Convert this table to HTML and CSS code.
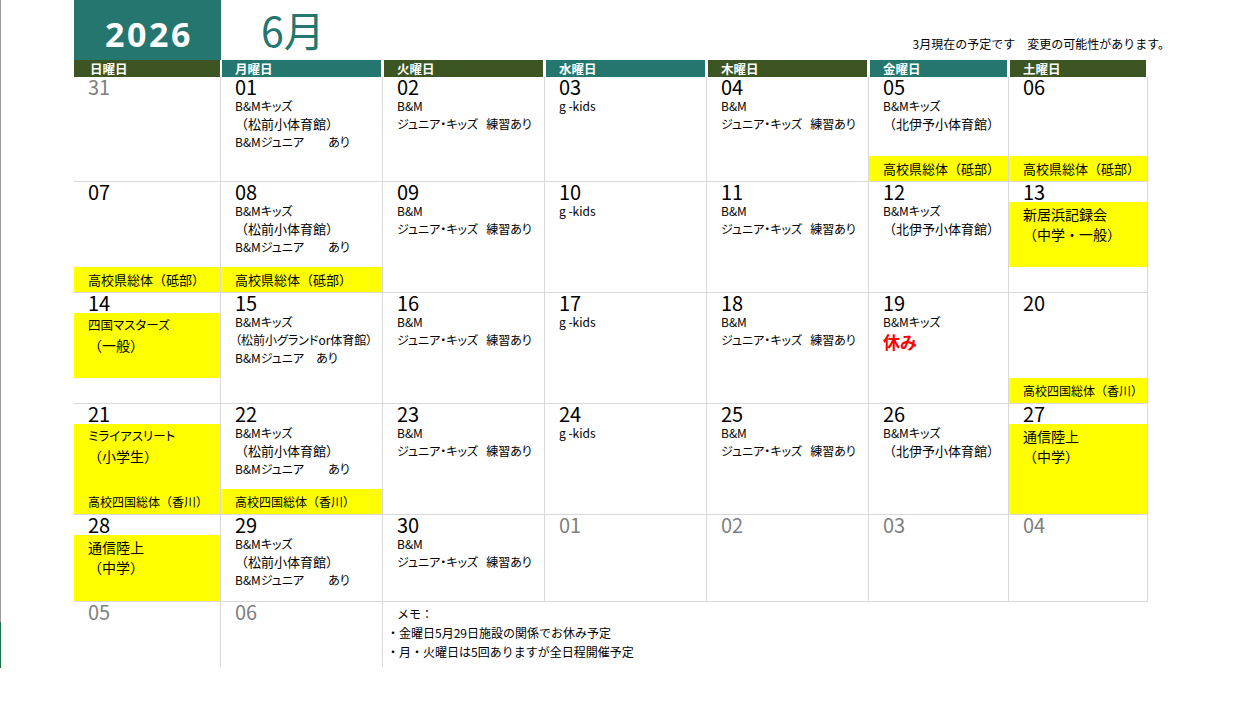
FILE: index.html
```html
<!DOCTYPE html>
<html lang="ja">
<head>
<meta charset="utf-8">
<title>2026年6月 予定表</title>
<link rel="stylesheet" href="styles.css">
</head>
<body>
<div class="frame">
  <div class="edge"><div class="edge-gray"></div><div class="edge-green"></div></div>
  <div class="sheet">
    <header class="top">
      <div class="year">2026</div>
      <div class="month">6月</div>
      <p class="note">3月現在の予定です　変更の可能性があります。</p>
    </header>
    <div class="cal">
      <div class="dow dow-sun olive">日曜日</div>
      <div class="dow teal">月曜日</div>
      <div class="dow olive">火曜日</div>
      <div class="dow teal">水曜日</div>
      <div class="dow olive">木曜日</div>
      <div class="dow teal">金曜日</div>
      <div class="dow olive">土曜日</div>

      <!-- week 1 -->
      <div class="day"><div class="num out">31</div><div class="evs"></div></div>
      <div class="day"><div class="num">01</div><div class="evs">
        <div class="ev">B&amp;Mキッズ</div>
        <div class="ev np">（松前小体育館）</div>
        <div class="ev">B&amp;Mジュニア　　あり</div>
      </div></div>
      <div class="day"><div class="num">02</div><div class="evs">
        <div class="ev">B&amp;M</div>
        <div class="ev">ジュニア・キッズ   練習あり</div>
      </div></div>
      <div class="day"><div class="num">03</div><div class="evs">
        <div class="ev">g -kids</div>
      </div></div>
      <div class="day"><div class="num">04</div><div class="evs">
        <div class="ev">B&amp;M</div>
        <div class="ev">ジュニア・キッズ   練習あり</div>
      </div></div>
      <div class="day"><div class="num">05</div><div class="evs">
        <div class="ev">B&amp;Mキッズ</div>
        <div class="ev np">（北伊予小体育館）</div>
      </div><div class="band hl">高校県総体（砥部）</div></div>
      <div class="day"><div class="num">06</div><div class="evs"></div><div class="band hl">高校県総体（砥部）</div></div>

      <!-- week 2 -->
      <div class="day"><div class="num">07</div><div class="evs"></div><div class="band hl">高校県総体（砥部）</div></div>
      <div class="day"><div class="num">08</div><div class="evs">
        <div class="ev">B&amp;Mキッズ</div>
        <div class="ev np">（松前小体育館）</div>
        <div class="ev">B&amp;Mジュニア　　あり</div>
      </div><div class="band hl">高校県総体（砥部）</div></div>
      <div class="day"><div class="num">09</div><div class="evs">
        <div class="ev">B&amp;M</div>
        <div class="ev">ジュニア・キッズ   練習あり</div>
      </div></div>
      <div class="day"><div class="num">10</div><div class="evs">
        <div class="ev">g -kids</div>
      </div></div>
      <div class="day"><div class="num">11</div><div class="evs">
        <div class="ev">B&amp;M</div>
        <div class="ev">ジュニア・キッズ   練習あり</div>
      </div></div>
      <div class="day"><div class="num">12</div><div class="evs">
        <div class="ev">B&amp;Mキッズ</div>
        <div class="ev np">（北伊予小体育館）</div>
      </div></div>
      <div class="day"><div class="num">13</div><div class="evs hl">
        <div class="ev big">新居浜記録会</div>
        <div class="ev big">（中学・一般）</div>
      </div><div class="band"></div></div>

      <!-- week 3 -->
      <div class="day"><div class="num">14</div><div class="evs hl">
        <div class="ev bigk">四国マスターズ</div>
        <div class="ev big">（一般）</div>
      </div><div class="band"></div></div>
      <div class="day"><div class="num">15</div><div class="evs">
        <div class="ev">B&amp;Mキッズ</div>
        <div class="ev">（松前小グランドor体育館）</div>
        <div class="ev">B&amp;Mジュニア　あり</div>
      </div></div>
      <div class="day"><div class="num">16</div><div class="evs">
        <div class="ev">B&amp;M</div>
        <div class="ev">ジュニア・キッズ   練習あり</div>
      </div></div>
      <div class="day"><div class="num">17</div><div class="evs">
        <div class="ev">g -kids</div>
      </div></div>
      <div class="day"><div class="num">18</div><div class="evs">
        <div class="ev">B&amp;M</div>
        <div class="ev">ジュニア・キッズ   練習あり</div>
      </div></div>
      <div class="day"><div class="num">19</div><div class="evs">
        <div class="ev">B&amp;Mキッズ</div>
        <div class="ev off">休み</div>
      </div></div>
      <div class="day"><div class="num">20</div><div class="evs"></div><div class="band sm hl">高校四国総体（香川）</div></div>

      <!-- week 4 -->
      <div class="day"><div class="num">21</div><div class="evs hl">
        <div class="ev bigk">ミライアスリート</div>
        <div class="ev big">（小学生）</div>
      </div><div class="band sm hl">高校四国総体（香川）</div></div>
      <div class="day"><div class="num">22</div><div class="evs">
        <div class="ev">B&amp;Mキッズ</div>
        <div class="ev np">（松前小体育館）</div>
        <div class="ev">B&amp;Mジュニア　　あり</div>
      </div><div class="band sm hl">高校四国総体（香川）</div></div>
      <div class="day"><div class="num">23</div><div class="evs">
        <div class="ev">B&amp;M</div>
        <div class="ev">ジュニア・キッズ   練習あり</div>
      </div></div>
      <div class="day"><div class="num">24</div><div class="evs">
        <div class="ev">g -kids</div>
      </div></div>
      <div class="day"><div class="num">25</div><div class="evs">
        <div class="ev">B&amp;M</div>
        <div class="ev">ジュニア・キッズ   練習あり</div>
      </div></div>
      <div class="day"><div class="num">26</div><div class="evs">
        <div class="ev">B&amp;Mキッズ</div>
        <div class="ev np">（北伊予小体育館）</div>
      </div></div>
      <div class="day"><div class="num">27</div><div class="evs hl">
        <div class="ev big">通信陸上</div>
        <div class="ev big">（中学）</div>
      </div></div>

      <!-- week 5 -->
      <div class="day"><div class="num">28</div><div class="evs hl">
        <div class="ev big">通信陸上</div>
        <div class="ev big">（中学）</div>
      </div></div>
      <div class="day"><div class="num">29</div><div class="evs">
        <div class="ev">B&amp;Mキッズ</div>
        <div class="ev np">（松前小体育館）</div>
        <div class="ev">B&amp;Mジュニア　　あり</div>
      </div></div>
      <div class="day"><div class="num">30</div><div class="evs">
        <div class="ev">B&amp;M</div>
        <div class="ev">ジュニア・キッズ   練習あり</div>
      </div></div>
      <div class="day"><div class="num out">01</div><div class="evs"></div></div>
      <div class="day"><div class="num out">02</div><div class="evs"></div></div>
      <div class="day"><div class="num out">03</div><div class="evs"></div></div>
      <div class="day"><div class="num out">04</div><div class="evs"></div></div>

      <!-- week 6 -->
      <div class="day last"><div class="num out">05</div><div class="evs"></div></div>
      <div class="day last"><div class="num out">06</div><div class="evs"></div></div>
      <div class="memo">
        <p class="memo-title">メモ：</p>
        <p>・金曜日5月29日施設の関係でお休み予定</p>
        <p>・月・火曜日は5回ありますが全日程開催予定</p>
      </div>
    </div>
  </div>
</div>
</body>
</html>
```

FILE: styles.css
```css
* {
  box-sizing: border-box;
  margin: 0;
  padding: 0;
}

body {
  margin: 0;
  background: #ffffff;
  color: #000000;
  font-family: "Noto Sans CJK JP", "Noto Sans", sans-serif;
}

.frame {
  display: flex;
  height: 668px;
}

.edge {
  width: 1px;
  display: flex;
  flex-direction: column;
}

.edge-gray {
  flex: 1;
  background: #9a9a9a;
}

.edge-green {
  height: 46px;
  background: #1e7145;
}

.sheet {
  flex: 1;
  margin-left: 73px;
}

.top {
  display: flex;
  height: 60px;
}

.year {
  width: 147px;
  height: 60px;
  padding: 16.5px 0 0 3px;
  background: #24766f;
  color: #ffffff;
  font-family: "Open Sans", sans-serif;
  font-weight: 700;
  font-size: 34px;
  line-height: 34px;
  letter-spacing: 2.5px;
  text-align: center;
}

.month {
  margin-left: 40px;
  padding-top: 9px;
  color: #24766f;
  font-size: 41px;
  line-height: 40px;
}

.note {
  margin-left: auto;
  margin-right: 79px;
  margin-top: 35px;
  font-size: 12px;
  line-height: 18px;
  white-space: pre;
}

.cal {
  display: grid;
  grid-template-columns: 147px 162px 162px 162px 162px 140px 139px;
  grid-template-rows: 17px 105px 111px 111px 111px 87px 65px;
}

.dow {
  margin: 0 2px 0 1px;
  padding-left: 13px;
  color: #ffffff;
  font-weight: 700;
  font-size: 12.5px;
  line-height: 17px;
}

.dow-sun {
  margin: 0 1px 0 0;
  padding-left: 16px;
}

.olive {
  background: #3d5522;
}

.teal {
  background: #24766f;
}

.day {
  display: flex;
  flex-direction: column;
  min-width: 0;
  border-right: 1px solid #d9d9d9;
  border-bottom: 1px solid #d9d9d9;
}

.day.last {
  border-bottom: none;
}

.num {
  height: 20px;
  padding-left: 14px;
  font-size: 20px;
  line-height: 20px;
}

.num.out {
  color: #7f7f7f;
}

.evs {
  flex: 1;
  padding-left: 14px;
}

.evs.hl {
  padding-top: 2px;
}

.ev {
  font-size: 12px;
  line-height: 18px;
  white-space: pre;
  font-feature-settings: "palt";
}

.ev.np {
  font-size: 13px;
  font-feature-settings: normal;
}

.ev.big {
  font-size: 14px;
  line-height: 20px;
  font-feature-settings: normal;
}

.ev.bigk {
  font-size: 12.5px;
  line-height: 20px;
}

.ev.off {
  color: #ff0000;
  font-weight: 700;
  font-size: 17px;
  line-height: 22px;
}

.hl {
  background: #ffff00;
}

.band {
  height: 25px;
  padding-left: 14px;
  font-size: 13px;
  line-height: 25px;
  white-space: pre;
}

.band.sm {
  font-size: 12px;
}

.memo {
  grid-column: 3 / span 5;
  padding: 2px 0 0 4px;
  font-size: 12px;
  line-height: 19px;
}

.memo-title {
  padding-left: 10px;
}
```
